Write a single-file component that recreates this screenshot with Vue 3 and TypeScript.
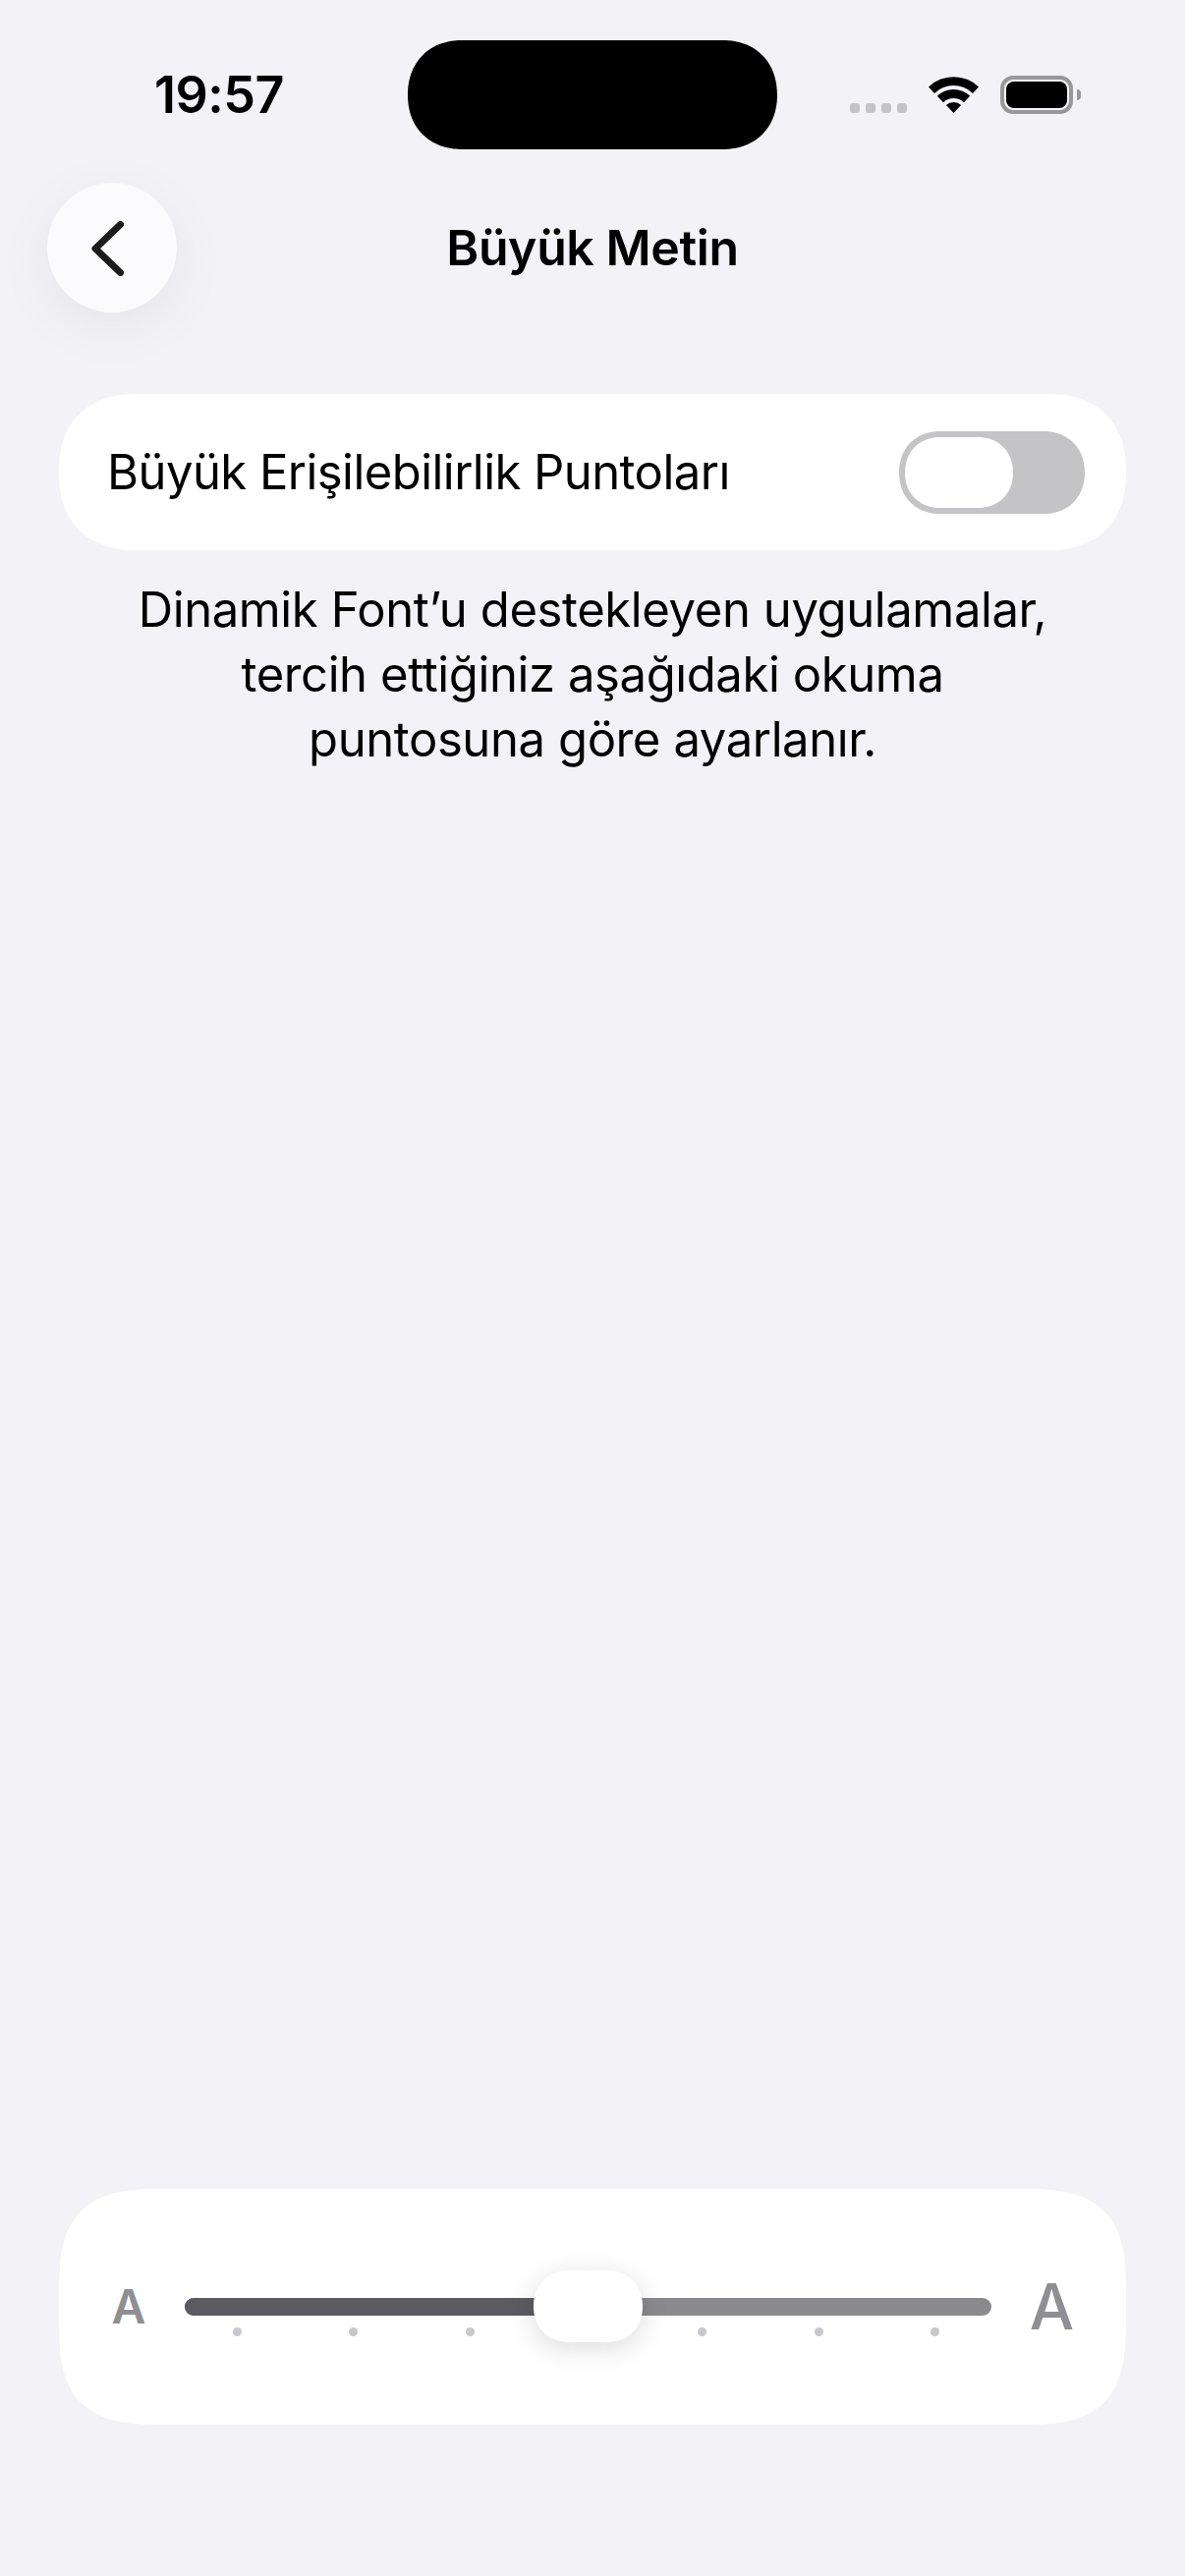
<script setup lang="ts">
const title = 'Büyük Metin';
const steps = 6;
const current = 3;
const ticks = Array.from({ length: steps + 1 }, (_, i) => i);
const fillWidth = `${(current / steps) * 100}%`;
</script>

<template>
  <div class="page">
    <div class="status">
      <div class="time">19:57</div>
      <div class="island"></div>
      <div class="icons">
        <div class="signal"><span v-for="n in 4" :key="n"></span></div>
        <svg class="wifi" width="51" height="37" viewBox="0 0 51 37">
          <path d="M0 10.4A37 37 0 0 1 51 10.4L45 16.9A28 28 0 0 0 6 16.9Z" />
          <path d="M8.8 19.7A24 24 0 0 1 42.2 19.7L35.9 26.2A15 15 0 0 0 15.1 26.2Z" />
          <path d="M17.9 29.1A11 11 0 0 1 33.1 29.1L25.5 37Z" />
        </svg>
        <div class="battery"><div class="level"></div></div>
        <div class="nub"></div>
      </div>
    </div>

    <div class="nav">
      <button class="back">
        <svg width="34" height="56" viewBox="0 0 34 56">
          <path d="M29.5 3.5L4 28L29.5 52.5" fill="none" stroke="#1c1c1e" stroke-width="7" stroke-linecap="round" stroke-linejoin="round" />
        </svg>
      </button>
      <div class="title">{{ title }}</div>
    </div>

    <div class="card row">
      <span class="label">Büyük Erişilebilirlik Puntoları</span>
      <div class="toggle"><div class="toggle-knob"></div></div>
    </div>

    <p class="note">
      Dinamik Font’u destekleyen uygulamalar,<br />
      tercih ettiğiniz aşağıdaki okuma<br />
      puntosuna göre ayarlanır.
    </p>

    <div class="slider-card">
      <span class="a small">A</span>
      <div class="slider">
        <div class="track">
          <div class="fill" :style="{ width: fillWidth }"></div>
          <div class="thumb"></div>
        </div>
        <div class="ticks">
          <span v-for="t in ticks" :key="t" class="tick"></span>
        </div>
      </div>
      <span class="a big">A</span>
    </div>
  </div>
</template>

<style>
html,
body {
  background: #f2f2f7;
}
</style>

<style scoped>
.page {
  display: flex;
  flex-direction: column;
  width: 1206px;
  height: 2622px;
  overflow: hidden;
  background: #f2f2f7;
  color: #000;
  font-family: Inter, "Liberation Sans", sans-serif;
}

.status {
  display: grid;
  grid-template-columns: 415px 376px 1fr;
  align-items: center;
  padding-top: 41px;
}

.time {
  padding-left: 157px;
  font-size: 52px;
  font-weight: 600;
  letter-spacing: -0.5px;
  line-height: 111px;
}

.island {
  height: 111px;
  border-radius: 56px;
  corner-shape: superellipse(1.12);
  background: #000;
}

.icons {
  display: flex;
  align-items: flex-end;
  height: 39px;
  padding-left: 74px;
}

.signal {
  display: flex;
  gap: 6px;
  margin-bottom: 1px;
}

.signal span {
  width: 10px;
  height: 10px;
  border-radius: 3px;
  background: #c4c4c8;
}

.wifi {
  margin: 0 22px 1px 22px;
  fill: #000;
}

.battery {
  box-sizing: border-box;
  width: 74px;
  height: 39px;
  padding: 2px;
  border: 4px solid #98989b;
  border-radius: 13px;
}

.level {
  height: 100%;
  border-radius: 8px;
  background: #000;
}

.nub {
  width: 4px;
  height: 11px;
  margin: 0 0 14px 4px;
  border-radius: 0 6px 6px 0;
  background: #98989b;
}

.nav {
  display: grid;
  grid-template-columns: 1fr auto 1fr;
  align-items: center;
  margin-top: 34px;
  padding: 0 48px;
}

.back {
  display: flex;
  align-items: center;
  justify-content: center;
  width: 132px;
  height: 132px;
  padding: 2px 9px 0 0;
  border: none;
  border-radius: 50%;
  background: #fbfbfe;
  box-shadow: 0 14px 60px rgba(0, 0, 0, 0.06);
}

.title {
  font-size: 50px;
  font-weight: 560;
  letter-spacing: -0.4px;
  line-height: 60px;
}

.card {
  margin: 83px 60px 0;
  background: #fff;
}

.row {
  display: flex;
  align-items: center;
  justify-content: space-between;
  height: 159px;
  padding: 0 42px 0 49px;
  border-radius: 79px;
  corner-shape: superellipse(1.2);
}

.label {
  font-size: 49px;
  letter-spacing: -0.55px;
  line-height: 60px;
}

.toggle {
  box-sizing: border-box;
  width: 189px;
  height: 84px;
  padding: 6px;
  border-radius: 42px;
  corner-shape: superellipse(1.1);
  background: #c4c4c6;
}

.toggle-knob {
  width: 110px;
  height: 72px;
  border-radius: 36px;
  corner-shape: superellipse(1.1);
  background: #fff;
}

.note {
  margin: 28px 60px 0;
  font-size: 49px;
  letter-spacing: -0.4px;
  line-height: 66px;
  text-align: center;
}

.slider-card {
  display: grid;
  grid-template-columns: 114px 1fr 123px;
  align-items: center;
  height: 240px;
  margin: auto 60px 154px;
  padding: 0 14px;
  border-radius: 110px;
  corner-shape: superellipse(1.6);
  background: #fff;
}

.a {
  color: #8e8e93;
  text-align: center;
  line-height: 1;
}

.small {
  font-size: 48px;
  font-weight: 600;
}

.big {
  font-size: 64px;
  font-weight: 500;
}

.slider {
  padding-top: 20px;
}

.track {
  position: relative;
  height: 18px;
  border-radius: 9px;
  background: #8a898e;
}

.fill {
  height: 100%;
  border-radius: 9px 0 0 9px;
  background: #5c5b61;
}

.thumb {
  position: absolute;
  top: -28px;
  left: 355px;
  width: 111px;
  height: 73px;
  border-radius: 36px;
  corner-shape: superellipse(1.1);
  background: #fff;
  box-shadow: 0 6px 28px rgba(0, 0, 0, 0.14);
}

.ticks {
  display: flex;
  justify-content: space-between;
  margin-top: 12px;
  padding: 0 53px 0 49px;
}

.tick {
  width: 9px;
  height: 9px;
  border-radius: 50%;
  background: #c7c7cc;
}
</style>
